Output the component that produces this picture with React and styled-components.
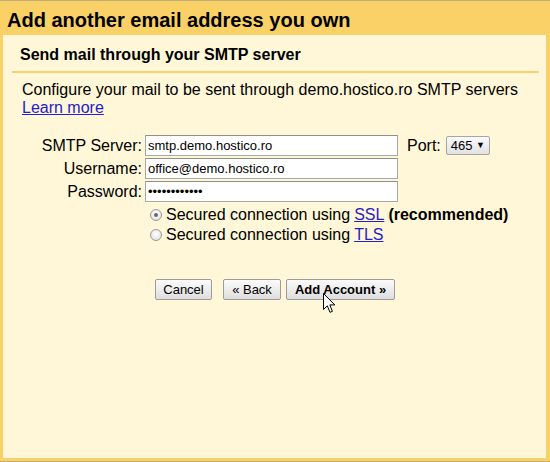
import React from 'react';
import styled, { createGlobalStyle } from 'styled-components';

const GlobalStyle = createGlobalStyle`
  html, body {
    margin: 0;
    padding: 0;
    background: #fad166;
  }
  body {
    font-family: "Liberation Sans", Arial, sans-serif;
    color: #000;
  }
`;

const Frame = styled.div`
  position: relative;
  width: 550px;
  height: 462px;
  box-sizing: border-box;
  border-top: 1px solid #bdae7e;
  border-bottom: 1px solid #bdae7e;
  background: #fad166;
  padding: 0 4px 3px 3px;
  display: flex;
  flex-direction: column;
`;

const Title = styled.h1`
  margin: 0;
  padding: 8px 0 3px 4px;
  font-size: 20px;
  line-height: 23px;
  font-weight: bold;
`;

const Panel = styled.div`
  flex: 1;
  background: #fff7d7;
  padding: 11px 7px 0 9px;
`;

const SubHeader = styled.h2`
  margin: 0;
  padding: 0 0 7px 8px;
  font-size: 16px;
  line-height: 18px;
  font-weight: bold;
  border-bottom: 2px solid #f5d170;
`;

const Intro = styled.p`
  margin: 8px 0 0 10px;
  font-size: 16px;
  line-height: 18px;
`;

const Link = styled.a`
  color: #2222cc;
  text-decoration: underline;
  cursor: pointer;
`;

const Form = styled.div`
  margin-top: 18px;
  display: grid;
  grid-template-columns: 130px 253px auto;
  column-gap: 3px;
  row-gap: 2px;
  align-items: center;
`;

const Label = styled.label`
  text-align: right;
  font-size: 16px;
  line-height: 18px;
  white-space: nowrap;
`;

const TextInput = styled.input`
  box-sizing: border-box;
  width: 253px;
  height: 21px;
  margin: 0;
  padding: 1px 2px;
  border: 1px solid #a9a9a9;
  border-top-color: #8e8e8e;
  background: #fff;
  font-family: "Liberation Sans", Arial, sans-serif;
  font-size: 13px;
  color: #000;
  outline: none;
`;

const PortCell = styled.div`
  display: flex;
  align-items: center;
  gap: 5px;
  padding-left: 6px;
  font-size: 16px;
`;

const Dropdown = styled.div`
  box-sizing: border-box;
  width: 44px;
  height: 19px;
  display: flex;
  align-items: center;
  justify-content: space-between;
  padding: 0 4px 0 4px;
  border: 1px solid #a6a6a6;
  border-radius: 2px;
  background: linear-gradient(#fafafa, #e2e2e2);
  font-size: 13px;
`;

const Arrow = styled.span`
  font-size: 9px;
  line-height: 1;
`;

const Options = styled.div`
  grid-column: 2 / 4;
  display: flex;
  flex-direction: column;
  padding: 1px 0 0 5px;
`;

const Option = styled.label`
  display: flex;
  align-items: center;
  gap: 4px;
  height: 20px;
  font-size: 16px;
  white-space: nowrap;
`;

const Radio = styled.span`
  box-sizing: border-box;
  width: 12px;
  height: 12px;
  border-radius: 50%;
  border: 1px solid #9a9a9a;
  background: radial-gradient(circle at 50% 40%, #ffffff 0%, #e6e6e6 70%, #d4d4d4 100%);
  display: flex;
  align-items: center;
  justify-content: center;

  &::after {
    content: '';
    width: 4px;
    height: 4px;
    border-radius: 50%;
    background: ${(p) => (p.$checked ? '#6a6a6a' : 'transparent')};
  }
`;

const Buttons = styled.div`
  margin-top: 34px;
  padding-left: 143px;
  display: flex;
  align-items: center;
`;

const Button = styled.button`
  box-sizing: border-box;
  height: 21px;
  margin: 0 ${(p) => p.$gap || 0}px 0 0;
  padding: 0 4px;
  border: 1px solid #9c9c9c;
  border-radius: 2px;
  background: linear-gradient(#fbfbfb, #dedede);
  font-family: "Liberation Sans", Arial, sans-serif;
  font-size: 13px;
  font-weight: ${(p) => (p.$primary ? 'bold' : 'normal')};
  white-space: nowrap;
  color: #000;
  width: ${(p) => p.$width}px;
`;

const Pointer = styled.svg`
  position: absolute;
  left: 323px;
  top: 292px;
  pointer-events: none;
`;

const App = () => {
  return (
    <Frame>
      <GlobalStyle />
      <Title>Add another email address you own</Title>
      <Panel>
        <SubHeader>Send mail through your SMTP server</SubHeader>
        <Intro>
          Configure your mail to be sent through demo.hostico.ro SMTP servers
          <br />
          <Link>Learn more</Link>
        </Intro>

        <Form>
          <Label>SMTP Server:</Label>
          <TextInput type="text" defaultValue="smtp.demo.hostico.ro" />
          <PortCell>
            Port:
            <Dropdown>
              465 <Arrow>▼</Arrow>
            </Dropdown>
          </PortCell>

          <Label>Username:</Label>
          <TextInput type="text" defaultValue="office@demo.hostico.ro" />
          <span />

          <Label>Password:</Label>
          <TextInput type="password" defaultValue="hostico12345" />
          <span />

          <span />
          <Options>
            <Option>
              <Radio $checked />
              Secured connection using <Link>SSL</Link> <b>(recommended)</b>
            </Option>
            <Option>
              <Radio />
              Secured connection using <Link>TLS</Link>
            </Option>
          </Options>
        </Form>

        <Buttons>
          <Button $width={57} $gap={11}>Cancel</Button>
          <Button $width={58} $gap={5}>« Back</Button>
          <Button $width={109} $primary>Add Account »</Button>
        </Buttons>
      </Panel>

      <Pointer width="13" height="21" viewBox="0 0 13 21">
        <path
          d="M0.5 0.5 L0.5 16.5 L4.3 12.8 L7 19.3 L9.4 18.3 L6.8 11.9 L11.8 11.9 Z"
          fill="#fff"
          stroke="#000"
          strokeWidth="1"
          strokeLinejoin="round"
        />
      </Pointer>
    </Frame>
  );
};

export default App;
